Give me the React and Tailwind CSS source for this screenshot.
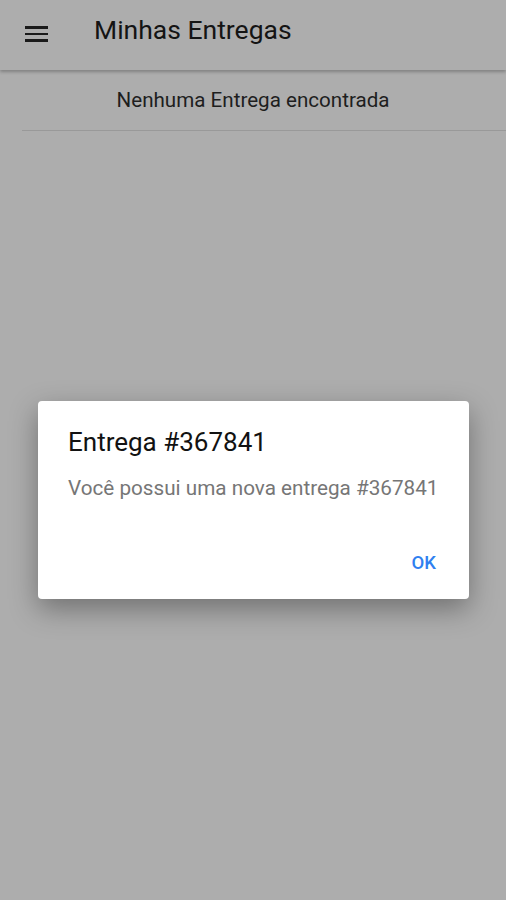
export default function App() {
  return (
    <div className="relative h-[900px] w-[506px] overflow-hidden bg-[#adadad]" style={{ fontFamily: 'Roboto, "Noto Sans", sans-serif' }}>
      <header className="flex h-[70px] items-start bg-[#adadad] shadow-[0_2px_3px_rgba(0,0,0,0.25)]">
        <div className="ml-[25px] mt-[26px] flex w-[23px] flex-col gap-[4px]">
          <span className="block h-[2.5px] w-full bg-[#1a1a1a]" />
          <span className="block h-[2.5px] w-full bg-[#1a1a1a]" />
          <span className="block h-[2.5px] w-full bg-[#1a1a1a]" />
        </div>
        <h1 className="ml-[46px] mt-[17px] text-[26.5px] leading-none text-[#141414]">Minhas Entregas</h1>
      </header>
      <div className="ml-[22px] flex h-[61px] items-center justify-center border-b border-[#999999] pr-[22px] text-[20.6px] text-[#1e1e1e]">
        Nenhuma Entrega encontrada
      </div>

      <div className="absolute left-[38px] top-[401px] w-[431px] rounded-[4px] bg-white shadow-[0_10px_28px_rgba(0,0,0,0.35)]">
        <div className="px-[30px] pt-[26px]">
          <div className="text-[26px] leading-[30px] text-[#121212]">Entrega #367841</div>
          <div className="mt-[19px] text-[20.7px] leading-[24px] text-[#767676]">Você possui uma nova entrega #367841</div>
        </div>
        <div className="flex justify-end pb-[26px] pr-[33px] pt-[53px]">
          <span className="text-[18.5px] font-medium leading-[20px] text-[#2f80f0]">OK</span>
        </div>
      </div>
    </div>
  );
}
